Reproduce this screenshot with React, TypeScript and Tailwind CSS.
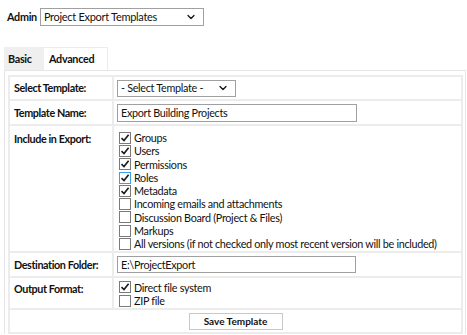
import { ChevronDown } from 'lucide-react';

function Check({ checked, focus }: { checked?: boolean; focus?: boolean }) {
  return (
    <span
      className={
        'inline-flex w-[12px] h-[12px] mr-[3px] shrink-0 items-center justify-center bg-white border ' +
        (focus ? 'border-[#3c9ee8]' : 'border-[#7a7a7a]')
      }
    >
      {checked && (
        <svg width="10" height="10" viewBox="0 0 10 10">
          <path d="M1.5 5.2 L4 7.6 L8.6 1.8" fill="none" stroke="#1a1a1a" strokeWidth="1.6" />
        </svg>
      )}
    </span>
  );
}

const exportItems = [
  { label: 'Groups', checked: true },
  { label: 'Users', checked: true },
  { label: 'Permissions', checked: true },
  { label: 'Roles', checked: true, focus: true },
  { label: 'Metadata', checked: true },
  { label: 'Incoming emails and attachments' },
  { label: 'Discussion Board (Project & Files)' },
  { label: 'Markups' },
  { label: 'All versions (if not checked only most recent version will be included)' },
];

const label = 'border-2 border-[#ececec] font-bold pl-[4px] tracking-[-0.4px]';

export default function App() {
  return (
    <div className="w-[467px] h-[335px] overflow-hidden bg-white text-[#111] text-[10.8px] tracking-[-0.3px] leading-[13.3px] whitespace-nowrap font-['Lato',sans-serif]">
      <div className="flex items-center pt-[8px] pl-[7px]">
        <span className="font-bold mr-[3px]">Admin</span>
        <div className="flex items-center justify-between w-[164px] h-[18px] border border-[#a0a0a0] pl-[3px] pr-[6px] text-[11px]">
          <span>Project Export Templates</span>
          <ChevronDown size={12} strokeWidth={2.5} />
        </div>
      </div>

      <div className="flex ml-[4px] mt-[21px] h-[23px]">
        <div className="w-[40px] bg-[#efefef] font-bold flex items-center pl-[4px]">Basic</div>
        <div className="w-[64px] border-t border-r border-[#ececec] font-bold flex items-center pl-[5px]">
          Advanced
        </div>
      </div>

      <div className="ml-[4px] w-[462px] border-l border-t border-r border-[#e6e6e6] pt-[4px] pl-[3px]">
        <table className="w-[455px] border-collapse table-fixed">
          <tbody>
            <tr className="h-[24px]">
              <td className={label + ' w-[104px]'}>Select Template:</td>
              <td className="border-2 border-[#ececec] pl-[3px]">
                <div className="flex items-center justify-between w-[119px] h-[17px] border border-[#a0a0a0] pl-[3px] pr-[6px]">
                  <span>- Select Template -</span>
                  <ChevronDown size={12} strokeWidth={2.5} />
                </div>
              </td>
            </tr>
            <tr className="h-[25px]">
              <td className={label}>Template Name:</td>
              <td className="border-2 border-[#ececec] pl-[3px]">
                <div className="flex items-center w-[240px] h-[18px] border border-[#a0a0a0] pl-[3px]">
                  Export Building Projects
                </div>
              </td>
            </tr>
            <tr>
              <td className={label + ' align-top pt-[6px]'}>Include in Export:</td>
              <td className="border-2 border-[#ececec] pl-[5px] pt-[5px] pb-0">
                {exportItems.map(item => (
                  <div key={item.label} className="flex items-center h-[13.3px]">
                    <Check checked={item.checked} focus={item.focus} />
                    <span>{item.label}</span>
                  </div>
                ))}
              </td>
            </tr>
            <tr className="h-[25px]">
              <td className={label}>Destination Folder:</td>
              <td className="border-2 border-[#ececec] pl-[3px]">
                <div className="flex items-center w-[239px] h-[17px] border border-[#a0a0a0] pl-[3px]">
                  E:\ProjectExport
                </div>
              </td>
            </tr>
            <tr>
              <td className={label + ' align-top pt-[4px]'}>Output Format:</td>
              <td className="border-2 border-[#ececec] pl-[5px] pt-[3px] pb-[1px]">
                <div className="flex items-center h-[13.3px]">
                  <Check checked />
                  <span>Direct file system</span>
                </div>
                <div className="flex items-center h-[13.3px]">
                  <Check />
                  <span>ZIP file</span>
                </div>
              </td>
            </tr>
            <tr className="h-[24px]">
              <td colSpan={2} className="border-2 border-[#ececec]">
                <div className="flex justify-center">
                  <div className="w-[94px] h-[17px] border border-[#c8c8c8] bg-white font-bold text-[10px] tracking-normal flex items-center justify-center">
                    Save Template
                  </div>
                </div>
              </td>
            </tr>
          </tbody>
        </table>
      </div>
    </div>
  );
}
